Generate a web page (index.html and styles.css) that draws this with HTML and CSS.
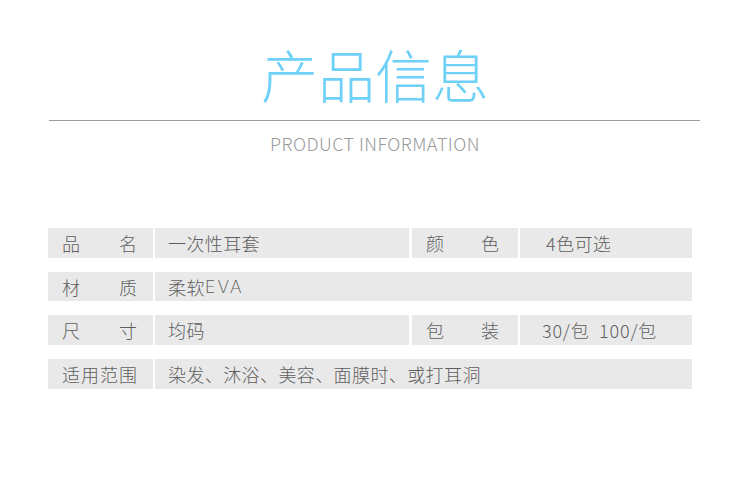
FILE: index.html
```html
<!DOCTYPE html>
<html lang="zh-CN">
<head>
<meta charset="utf-8">
<title>产品信息</title>
<link rel="stylesheet" href="styles.css">
</head>
<body>
<div class="page">
  <header class="head">
    <h1 class="title">产品信息</h1>
    <div class="rule"></div>
    <p class="subtitle">PRODUCT INFORMATION</p>
  </header>
  <div class="table">
    <div class="cell label"><span>品</span><span>名</span></div>
    <div class="cell value">一次性耳套</div>
    <div class="cell label label-r"><span>颜</span><span>色</span></div>
    <div class="cell value value-color">4色可选</div>

    <div class="cell label"><span>材</span><span>质</span></div>
    <div class="cell value wide">柔软<span class="latin">EVA</span></div>

    <div class="cell label"><span>尺</span><span>寸</span></div>
    <div class="cell value">均码</div>
    <div class="cell label label-r"><span>包</span><span>装</span></div>
    <div class="cell value value-pack">30/包&nbsp;&nbsp;100/包</div>

    <div class="cell label"><span>适</span><span>用</span><span>范</span><span>围</span></div>
    <div class="cell value wide">染发、沐浴、美容、面膜时、或打耳洞</div>
  </div>
</div>
</body>
</html>
```
FILE: styles.css
```css
html, body {
  margin: 0;
  padding: 0;
  background: #ffffff;
}
.page {
  width: 750px;
  height: 492px;
  font-family: "Noto Sans CJK SC", "Noto Sans", sans-serif;
}
.head {
  display: flex;
  flex-direction: column;
  align-items: center;
  padding-top: 38px;
}
.title {
  margin: 0;
  font-size: 57px;
  line-height: 70px;
  font-weight: 300;
  color: #6fd0f8;
}
.rule {
  margin-top: 12px;
  width: 651px;
  height: 1px;
  background: #9c9c9c;
  align-self: flex-start;
  margin-left: 49px;
}
.subtitle {
  margin: 10px 0 0;
  font-size: 18px;
  line-height: 24px;
  font-weight: 300;
  color: #9a9a9a;
  letter-spacing: 0.45px;
}
.table {
  margin: 73px 0 0 48px;
  width: 644px;
  display: grid;
  grid-template-columns: 105px 256px 109px 174px;
  row-gap: 14px;
  grid-auto-rows: 29.7px;
}
.cell {
  background: #e9e9e9;
  color: #5e5e5e;
  font-size: 18px;
  font-weight: 300;
  display: flex;
  align-items: center;
  box-sizing: border-box;
  white-space: nowrap;
}
.label {
  justify-content: space-between;
  padding: 0 16px 0 14px;
}
.value {
  margin-left: 2px;
  padding-left: 13px;
  letter-spacing: 0.4px;
}
.label-r {
  margin-left: 3px;
  padding: 0 19px 0 14px;
}
.value-color {
  padding-left: 26px;
}
.value-pack {
  padding-left: 22px;
  letter-spacing: 0.8px;
}
.latin {
  font-family: "DejaVu Sans", sans-serif;
  font-size: 17px;
  font-weight: 200;
  letter-spacing: 2px;
}
.wide {
  grid-column: 2 / 5;
}
```
